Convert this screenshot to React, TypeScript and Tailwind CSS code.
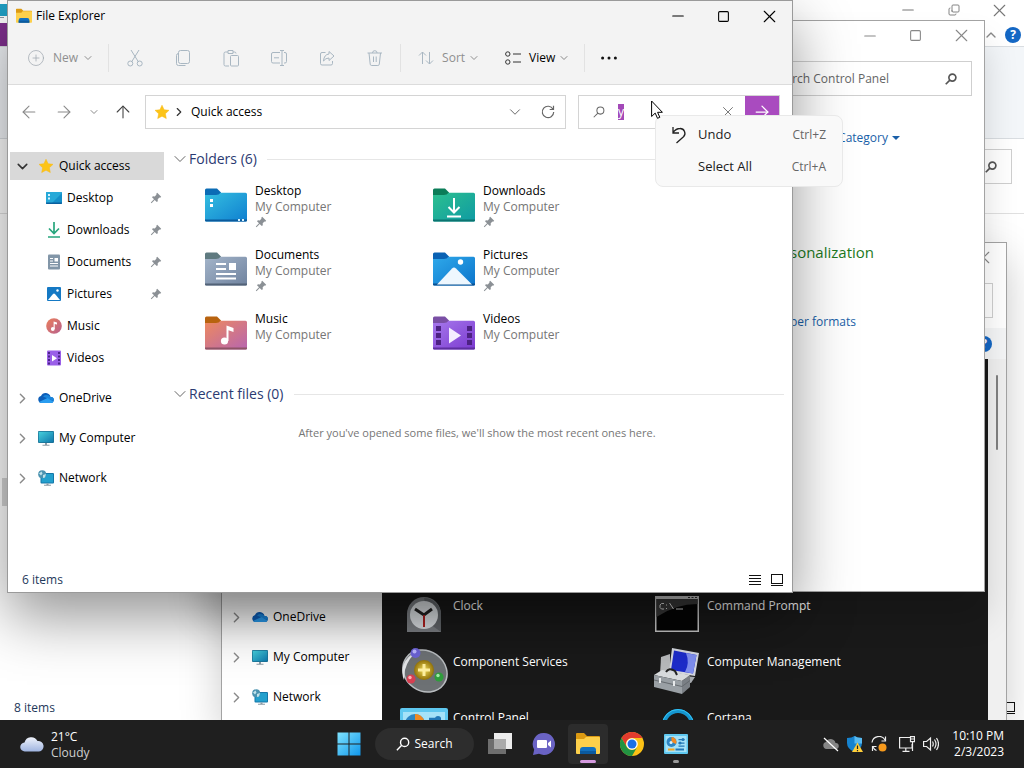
import type { ReactNode } from "react"
import {
	ArrowLeft,
	ArrowRight,
	ArrowUp,
	ChevronDown,
	ChevronRight,
	ChevronUp,
	CirclePlus,
	Copy,
	Minus,
	Square,
	X,
} from "lucide-react"

const places = [
	{ name: "Desktop", icon: <DesktopSmall />, pinned: true },
	{ name: "Downloads", icon: <DownloadsSmall />, pinned: true },
	{ name: "Documents", icon: <DocumentsSmall />, pinned: true },
	{ name: "Pictures", icon: <PicturesSmall />, pinned: true },
	{ name: "Music", icon: <MusicSmall />, pinned: false },
	{ name: "Videos", icon: <VideosSmall />, pinned: false },
]

const drives = [
	{ name: "OneDrive", icon: <OneDriveIcon /> },
	{ name: "My Computer", icon: <ComputerIcon /> },
	{ name: "Network", icon: <NetworkIcon /> },
]

const folders = [
	{
		name: "Desktop",
		pinned: true,
		colors: ["#0b6cb5", "#35bfe0", "#0f7fd0", "#0a5a9c"],
		art: (
			<>
				<path d="M5 11h3v3H5zM5 16h3v3H5z" fill="#fff" />
				<path d="M33 31h2v2h-2zM37 31h2v2h-2z" fill="#d8f3ff" />
			</>
		),
	},
	{
		name: "Downloads",
		pinned: true,
		colors: ["#0b7d58", "#2cc08f", "#0f9aa3", "#0b7470"],
		art: (
			<path
				d="M21 10v14M15.500 19l5.500 5.500 5.500-5.500M14 28.500h14"
				fill="none"
				stroke="#fff"
				strokeWidth="2"
			/>
		),
	},
	{
		name: "Documents",
		pinned: true,
		colors: ["#5f7a80", "#a3b4c9", "#70839f", "#526277"],
		art: (
			<>
				<path
					d="M11 12h10M11 17h10M11 22h20M11 26.500h20"
					stroke="#fff"
					strokeWidth="2"
				/>
				<path d="M24 11h7v7h-7z" fill="#fff" />
			</>
		),
	},
	{
		name: "Pictures",
		pinned: true,
		colors: ["#0a62b4", "#2fa9ea", "#0c74cb", "#0a5192"],
		art: (
			<>
				<path d="M4 32.500 19 16.500q2-2 4 0L39 32.500z" fill="#eef7fe" />
				<circle cx="27.500" cy="10" r="2.700" fill="#fff" />
			</>
		),
	},
	{
		name: "Music",
		pinned: false,
		colors: ["#b8630f", "#ee8a5e", "#b765b0", "#8e5467"],
		art: (
			<>
				<circle cx="19.500" cy="25" r="3.600" fill="#fff" />
				<path d="M21.500 25V9.500l7 2.500v4l-5-1.700V25z" fill="#fff" />
			</>
		),
	},
	{
		name: "Videos",
		pinned: false,
		colors: ["#7a4fa5", "#a678ec", "#7b3ad0", "#5e2fa0"],
		art: (
			<>
				<path d="M16 11.500v16L28 19.500z" fill="#f4ecff" />
				<path
					d="M3 10h5v5H3zM3 17h5v5H3zM3 24h5v5H3zM34 10h5v5h-5zM34 17h5v5h-5zM34 24h5v5h-5z"
					fill="#4d2283"
				/>
			</>
		),
	},
]

const tools = [
	{ name: "Clock", icon: <ClockIcon /> },
	{ name: "Command Prompt", icon: <PromptIcon /> },
	{ name: "Component Services", icon: <ComponentIcon /> },
	{ name: "Computer Management", icon: <ManagementIcon /> },
	{ name: "Control Panel", icon: <ControlPanelIcon className="mt-1.5 h-10 w-12" /> },
	{ name: "Cortana", icon: <CortanaIcon /> },
]

function SearchIcon({ weight, className }: { weight: number; className: string }) {
	return (
		<svg
			viewBox="0 0 13 13"
			className={`shrink-0 ${className}`}
			fill="none"
			stroke="currentColor"
			strokeWidth={weight}
		>
			<circle cx="8" cy="5" r="3.800" />
			<path d="M5.300 7.700.800 12.200" />
		</svg>
	)
}

function Star() {
	return (
		<svg viewBox="0 0 16 16" className="size-4">
			<path
				d="M8 1.200l2.100 4.500 4.900.600-3.600 3.400.900 4.900L8 12.200l-4.300 2.400.900-4.900L1 6.300l4.900-.600z"
				fill="#fcc419"
				stroke="#f9b814"
				strokeWidth=".5"
				strokeLinejoin="round"
			/>
		</svg>
	)
}

function Pin() {
	return (
		<svg viewBox="0 0 12 12" className="size-3">
			<path
				d="M7.200.800 11.200 4.800 10.200 5.700 9.500 5.500 7.700 7.300 7.800 9.200 6.800 10 4.700 8 1.500 11.200.800 10.500 4 7.300 2 5.200 2.900 4.300 4.800 4.400 6.500 2.600 6.300 1.800z"
				fill="#8b9095"
			/>
		</svg>
	)
}

function DesktopSmall() {
	return (
		<svg viewBox="0 0 16 16" className="size-4">
			<rect y="2" width="16" height="12" rx="1" fill="#158fc9" />
			<path d="M0 3a1 1 0 011-1h14a1 1 0 011 1L5 14H1a1 1 0 01-1-1z" fill="#27a9d8" />
			<path d="M2 4h2v2H2zM2 7.500h2v2H2z" fill="#d9f4ff" />
			<path d="M0 12.500h16V13a1 1 0 01-1 1H1a1 1 0 01-1-1z" fill="#0a5f9e" />
		</svg>
	)
}

function DownloadsSmall() {
	return (
		<svg viewBox="0 0 16 16" className="size-4">
			<path
				d="M8 0v11M3 6.500l5 5 5-5M2 15h12"
				fill="none"
				stroke="#27a67d"
				strokeWidth="1.700"
			/>
		</svg>
	)
}

function DocumentsSmall() {
	return (
		<svg viewBox="0 0 16 16" className="size-4">
			<rect x="2" y=".5" width="12" height="15" rx="1" fill="#8296a8" />
			<path d="M4 4.500h3M4 7h3M4 9.500h8M4 12h8" stroke="#fff" />
			<path d="M8.500 4h3.500v3.500H8.500z" fill="#fff" />
		</svg>
	)
}

function PicturesSmall() {
	return (
		<svg viewBox="0 0 16 16" className="size-4">
			<rect x="1" y="1" width="14" height="14" rx="1" fill="#1579c4" />
			<path d="M2 14 7 8q1-1 2 0l5 6z" fill="#fff" />
			<circle cx="11.500" cy="4.500" r="1.200" fill="#fff" />
		</svg>
	)
}

function MusicSmall() {
	return (
		<svg viewBox="0 0 16 16" className="size-4">
			<defs>
				<linearGradient id="music-small" x1="0" y1="0" x2="1" y2="1">
					<stop stopColor="#ea7e5b" />
					<stop offset="1" stopColor="#b8618e" />
				</linearGradient>
			</defs>
			<circle cx="8" cy="8" r="7.800" fill="url(#music-small)" />
			<circle cx="6.800" cy="11" r="1.900" fill="#fff" />
			<path d="M7.600 11V3.500l3.400 1v2L8.700 6v5z" fill="#fff" />
		</svg>
	)
}

function VideosSmall() {
	return (
		<svg viewBox="0 0 16 16" className="size-4">
			<rect x="1" y=".5" width="14" height="15" rx="1" fill="#9a5fe8" />
			<path d="M6 5v6.500l5-3.300z" fill="#fff" />
			<path
				d="M2 2h2v2H2zM2 5.500h2v2H2zM2 9h2v2H2zM2 12.500h2v2H2zM12 2h2v2h-2zM12 5.500h2v2h-2zM12 9h2v2h-2zM12 12.500h2v2h-2z"
				fill="#4c2489"
			/>
		</svg>
	)
}

function OneDriveIcon() {
	return (
		<svg viewBox="0 0 16 16" className="size-4">
			<path d="M3.500 13A3.500 3.500 0 013 6.100 5 5 0 0112.500 7 3 3 0 0113 13z" fill="#0d5eb8" />
			<path d="M5 6.500 15.500 11A2.600 2.600 0 0013 7h-.5A5 5 0 005 6.500z" fill="#1a86dc" />
			<path d="M1 12 9.500 8l6 3.500A2.500 2.500 0 0113 13H3.500A3.500 3.500 0 011 12z" fill="#2a9df0" />
		</svg>
	)
}

function ComputerIcon() {
	return (
		<svg viewBox="0 0 16 16" className="size-4">
			<defs>
				<linearGradient id="screen" x1="0" y1="0" x2="1" y2="1">
					<stop stopColor="#46d0dc" />
					<stop offset="1" stopColor="#0f77ab" />
				</linearGradient>
			</defs>
			<rect y="1" width="16" height="12" rx="1" fill="#1b6f93" />
			<rect x=".7" y="1.700" width="14.600" height="10.600" rx=".5" fill="url(#screen)" />
			<path d="M7 13h2v2H7zM4.500 14.800h7v1h-7z" fill="#8b9aa5" />
		</svg>
	)
}

function NetworkIcon() {
	return (
		<svg viewBox="0 0 16 16" className="size-4">
			<rect x="2.500" y="3" width="13.500" height="10.500" rx="1" fill="#1577a8" />
			<rect x="3.500" y="4" width="11.500" height="8.500" fill="#23a0cd" />
			<path d="M8.500 13.500h2v1.500h-2zM6 14.800h7v1H6z" fill="#8b9aa5" />
			<circle cx="4.200" cy="4.200" r="4" fill="#4c93b0" />
			<path d="M1 3.500l2.500-2 1 2L3 5.500zM5 5l3-1-1 3.500-2 .5z" fill="#c0e2ea" />
		</svg>
	)
}

function ExplorerIcon({ className }: { className: string }) {
	return (
		<svg viewBox="0 0 24 24" className={className}>
			<path d="M0 2a1 1 0 011-1h7l3 3h12a1 1 0 011 1v6H0z" fill="#dc9a12" />
			<path d="M0 7h8l2-2h13a1 1 0 011 1v15a1 1 0 01-1 1H1a1 1 0 01-1-1z" fill="#fdd04b" />
			<path d="M4 22v-4a3 3 0 013-3h10a3 3 0 013 3v4z" fill="#1271c0" />
			<path d="M4 19h16v3H4z" fill="#0b5a9f" />
		</svg>
	)
}

function Folder({ name, colors, art }: { name: string; colors: string[]; art: ReactNode }) {
	return (
		<svg viewBox="0 0 42 34" className="h-[34px] w-[42px] shrink-0">
			<defs>
				<linearGradient id={`folder-${name}`} x1="0" y1="0" x2="1" y2="1">
					<stop stopColor={colors[1]} />
					<stop offset="1" stopColor={colors[2]} />
				</linearGradient>
			</defs>
			<path d="M0 2a1.500 1.500 0 011.500-1.500h10.500l4 4V12H0z" fill={colors[0]} />
			<path
				d="M0 7h11q3 0 4.500-2.200h25A1.500 1.500 0 0142 6.300V32a1.500 1.500 0 01-1.500 1.500h-39A1.500 1.500 0 010 32z"
				fill={`url(#folder-${name})`}
			/>
			<path d="M0 31.500h42a1.500 1.500 0 01-1.500 2h-39a1.500 1.500 0 01-1.500-2z" fill={colors[3]} />
			{art}
		</svg>
	)
}

function ClockIcon() {
	return (
		<svg viewBox="0 0 48 48" className="size-12">
			<path d="M7 42V24a17 17 0 0134 0v18z" fill="#7d8185" />
			<path d="M24 8a17 17 0 0117 17v17L30 34z" fill="#63676b" />
			<circle cx="24" cy="25" r="14" fill="#dfe3e6" />
			<path d="M15 19l9 6 8-6" fill="none" stroke="#222" strokeWidth="3" />
			<path d="M24 25v12" stroke="#b3201f" strokeWidth="2" />
		</svg>
	)
}

function PromptIcon() {
	return (
		<svg viewBox="0 0 48 48" className="size-12">
			<path d="M1 6h44v36H1z" fill="#c9c9c9" />
			<path d="M2.500 9h41v31.500h-41z" fill="#050505" />
			<path d="M2.500 9h41v5Q22 14 2.500 27z" fill="#3a3a3a" />
			<path d="M34 7.500h2M37.500 7.500h2M41 7.500h2" stroke="#333" />
			<path
				d="M10 13.500H7.500L6 15v2.500L7.500 19H10M12.500 14.500v1M12.500 18v1M15.500 13l4 6M22 19h7"
				fill="none"
				stroke="#ddd"
			/>
		</svg>
	)
}

function ComponentIcon() {
	return (
		<svg viewBox="0 0 48 48" className="size-12">
			<defs>
				<radialGradient id="gold">
					<stop stopColor="#f4de5a" />
					<stop offset="1" stopColor="#927209" />
				</radialGradient>
			</defs>
			<ellipse cx="25" cy="25" rx="23" ry="20" transform="rotate(35 25 25)" fill="#6d7174" stroke="#b9bdc0" strokeWidth="1.500" />
			<path d="M4 34a22 22 0 01-1-14Q6 10 18 5 8 12 5 24z" fill="#e4e6e8" />
			<circle cx="24" cy="24" r="10" fill="url(#gold)" />
			<path d="M24 18v12M18 24h12" stroke="#fff0a0" strokeWidth="3" />
			<circle cx="15.500" cy="7" r="5" fill="#6c63d6" />
			<circle cx="14.500" cy="5.500" r="2" fill="#bcb8ff" />
			<circle cx="11" cy="33" r="4.500" fill="#d84052" />
			<circle cx="10" cy="31.500" r="1.700" fill="#ffb3b8" />
			<circle cx="39" cy="31" r="4.500" fill="#2f9e3c" />
			<circle cx="38" cy="29.500" r="1.700" fill="#a4ecaa" />
		</svg>
	)
}

function ManagementIcon() {
	return (
		<svg viewBox="0 0 48 48" className="size-12">
			<path d="M7 11l9-3v18L6 29z" fill="#b8babc" />
			<path d="M18 2l27 5-4 23-26-4z" fill="#d5d8e0" />
			<path d="M20 4.500 42.500 9 39 27.500 17 24z" fill="#1d2ccb" />
			<path d="M32 7l10.500 2L39 27.500 31 26q5-9 1-19z" fill="#7f8ff0" />
			<path d="M31 30l10 1-4 6-5-1z" fill="#a7abb0" />
			<path d="M0 29l8-5 28 5-8 6z" fill="#d9dcde" />
			<path d="M0 29l28 6v13L0 41z" fill="#9aa0a5" />
			<path d="M28 35l8-6v12l-8 7z" fill="#7b8086" />
			<path d="M0 34l28 6.500 8-6" fill="none" stroke="#666b70" />
			<path d="M12 26q3-5 9-1l2 4" fill="none" stroke="#222" strokeWidth="2" />
			<path d="M6 32v5M20 35v5" stroke="#e9ebec" strokeWidth="2" />
		</svg>
	)
}

function ControlPanelIcon({ className }: { className: string }) {
	return (
		<svg viewBox="0 0 48 40" className={className} preserveAspectRatio="none">
			<rect width="48" height="40" rx="2" fill="#5fc8f0" />
			<rect x="3" y="4" width="42" height="32" fill="#a5e2f8" />
			<circle cx="15" cy="16" r="10" fill="#2e86c4" />
			<path d="M15 16V6a10 10 0 019 14z" fill="#f08a24" />
			<circle cx="14" cy="17" r="3" fill="#d6f3ff" />
			<path d="M29 11h12M29 18h12M29 24h12" stroke="#2379b8" strokeWidth="2.500" />
			<circle cx="38" cy="11" r="3" fill="#2379b8" />
			<circle cx="32" cy="18" r="3" fill="#2379b8" />
			<path d="M8 31h13" stroke="#f5a623" strokeWidth="4" />
			<path d="M23 31h17" stroke="#2379b8" strokeWidth="4" />
		</svg>
	)
}

function CortanaIcon() {
	return (
		<svg viewBox="0 0 48 48" className="size-12">
			<circle cx="24" cy="23" r="14" fill="none" stroke="#1596cf" strokeWidth="4" />
			<circle cx="24" cy="23" r="15.500" fill="none" stroke="#35c3f5" />
		</svg>
	)
}

function WindowControls({ color, restore }: { color: string; restore?: boolean }) {
	return (
		<div className={`flex items-center ${color}`}>
			<button aria-label="Minimize" className="flex h-5 w-[46px] items-center justify-center">
				<Minus size={18} strokeWidth={1.500} />
			</button>
			<button aria-label="Maximize" className="flex h-5 w-[45px] items-center justify-center">
				{restore ? (
					<Copy size={12} strokeWidth={1.800} className="-rotate-90" />
				) : (
					<Square size={13} strokeWidth={2} />
				)}
			</button>
			<button aria-label="Close" className="flex h-5 w-[46px] items-center justify-center">
				<X size={21} strokeWidth={1.300} />
			</button>
		</div>
	)
}

function DriveList() {
	return (
		<ul>
			{drives.map((drive) => (
				<li key={drive.name}>
					<button className="flex h-10 w-full items-center pl-[5px] text-black">
						<ChevronRight size={17} className="mr-[7px] text-[#8a8a8a]" />
						{drive.icon}
						<span className="ml-[5px]">{drive.name}</span>
					</button>
				</li>
			))}
		</ul>
	)
}

function ViewToggle() {
	return (
		<div className="flex items-center gap-2.5">
			<button aria-label="Details view">
				<svg viewBox="0 0 12 12" className="size-3" shapeRendering="crispEdges">
					<path d="M0 1.500h12M0 4.500h12M0 7.500h12M0 10.500h12" stroke="#111" />
				</svg>
			</button>
			<button aria-label="Large icons view">
				<svg viewBox="0 0 12 12" className="size-3" shapeRendering="crispEdges">
					<path d="M.5.500h11v9H.500zM0 11.500h12" fill="none" stroke="#111" />
				</svg>
			</button>
		</div>
	)
}

function HelpBadge() {
	return (
		<button
			aria-label="Help"
			className="flex size-4 items-center justify-center rounded-full bg-[#1467c4] text-xs font-bold text-white"
		>
			?
		</button>
	)
}

function RibbonWindow() {
	return (
		<section className="absolute inset-0 flex flex-col bg-white">
			<header className="flex h-[23px] items-start justify-between">
				<svg viewBox="0 0 16 16" className="mt-[3px] -ml-2 size-4">
					<rect y="1" width="16" height="12" rx="1" fill="#1f9fc4" />
					<path d="M4 14.500h8" stroke="#8b9aa5" />
				</svg>
				<WindowControls color="text-[#777] pr-[2px]" restore />
			</header>
			<div className="flex h-[23px] items-center justify-between pr-[3px]">
				<div className="h-full w-12 bg-[#80308f]" />
				<div className="flex items-center gap-1.5">
					<ChevronUp size={16} className="text-[#888]" />
					<HelpBadge />
				</div>
			</div>
			<div className="h-[93px] border-y border-[#d9dde1] bg-[#f3f6f9]" />
			<div className="flex h-[75px] items-start justify-end border-b border-[#e0e0e0] pt-[10px] pr-3">
				<div className="flex h-[35px] w-52 items-center justify-end border border-[#cfcfcf] pr-3.5">
					<SearchIcon weight={1.800} className="size-3 text-[#555]" />
				</div>
			</div>
			<div className="grow pt-[264px]">
				<div className="ml-0.5 h-[28px] w-[156px] bg-[#d4d4d4]" />
			</div>
			<footer className="flex h-6 items-center justify-between pr-[9px] pl-3.5 text-[#1e395b]">
				<span>8 items</span>
				<ViewToggle />
			</footer>
		</section>
	)
}

function ToolsWindow() {
	return (
		<section className="absolute top-[242px] bottom-0 left-[221px] flex w-[786px] flex-col border border-b-0 border-[#a3a3a3] bg-white shadow-[0_16px_40px_rgba(0,0,0,0.2)]">
			<header className="flex h-[29px] shrink-0 items-center justify-end">
				<WindowControls color="text-[#888]" />
			</header>
			<div className="flex h-14 shrink-0 items-center justify-end pr-[13px]">
				<div className="h-[35px] w-52 border border-[#cfcfcf]" />
			</div>
			<div className="flex h-[31px] shrink-0 items-center justify-end bg-[#f5f6f7] pr-[14px]">
				<HelpBadge />
			</div>
			<div className="flex min-h-0 grow overflow-hidden">
				<nav className="w-40 shrink-0 pt-[238px] pl-px">
					<DriveList />
				</nav>
				<ul className="grid grow grid-cols-[254px_254px] content-start bg-[#191919] pt-[231px] pl-[18px] text-white">
					{tools.map((tool) => (
						<li key={tool.name} className="flex h-14 gap-[5px]">
							{tool.icon}
							<span className="pt-2">{tool.name}</span>
						</li>
					))}
				</ul>
				<div className="w-[18px] bg-[#f0f0f0] pt-4 pl-2">
					<div className="h-[75px] w-0.5 rounded bg-[#808080]" />
				</div>
			</div>
		</section>
	)
}

function ControlPanelWindow() {
	return (
		<section className="absolute top-5 left-[199px] h-[572px] w-[786px] border border-[#a3a3a3] bg-white shadow-[0_24px_32px_rgba(0,0,0,0.15)]">
			<header className="flex h-[29px] items-center justify-end">
				<WindowControls color="text-[#888]" />
			</header>
			<div className="flex justify-end pt-[11px] pr-3">
				<label className="flex h-[35px] w-60 items-center gap-14 border border-[#cfcfcf] px-3.5">
					<input
						aria-label="Search Control Panel"
						placeholder="Search Control Panel"
						className="min-w-0 grow text-right outline-none placeholder:text-[#666]"
					/>
					<SearchIcon weight={1.800} className="size-3 text-[#555]" />
				</label>
			</div>
			<div className="flex h-[84px] items-center justify-end gap-1 pr-[84px] text-[#1a5fa8]">
				<button>Category</button>
				<svg viewBox="0 0 8 4" className="h-1 w-2">
					<path d="M0 0h8L4 4z" fill="#1a5fa8" />
				</svg>
			</div>
			<div className="flex flex-col items-end gap-[50px] pt-[62px] pr-[110px]">
				<a href="#appearance" className="text-[15px] leading-5 text-[#1d7a1d]">
					Appearance and Personalization
				</a>
				<a href="#formats" className="mr-[18px] leading-5 text-[#1a5fa8]">
					Change date, time, or number formats
				</a>
			</div>
		</section>
	)
}

function Divider() {
	return <div className="h-7 w-px bg-[#e2e2e2]" />
}

function Toolbar() {
	const icons = [
		{
			label: "Cut",
			art: <path d="M4 0l7.500 12M12 0 4.500 12M5.800 13.500a2.500 2.500 0 11-5 0 2.500 2.500 0 015 0zM15.200 13.500a2.500 2.500 0 11-5 0 2.500 2.500 0 015 0z" />,
		},
		{
			label: "Copy",
			art: <path d="M5.500.500h7a2 2 0 012 2v9a2 2 0 01-2 2h-7a2 2 0 01-2-2v-9a2 2 0 012-2zM3.500 3.500a2 2 0 00-2 2v8a2 2 0 002 2h7" />,
		},
		{
			label: "Paste",
			art: <path d="M5 2H2.500a1.500 1.500 0 00-1.500 1.500v11A1.500 1.500 0 002.500 16H6M5 .500h5v3H5zM10 2h1.500a1.500 1.500 0 011.500 1.500M8.500 5.500h6a1 1 0 011 1v8.500a1 1 0 01-1 1h-6a1 1 0 01-1-1V6.500a1 1 0 011-1z" />,
		},
		{
			label: "Rename",
			art: <path d="M9 2.500H2a1.500 1.500 0 00-1.500 1.500v7.500A1.500 1.500 0 002 13h7M13 2.500h1A1.500 1.500 0 0115.500 4v7.500A1.500 1.500 0 0114 13h-1M11 .500v15M9 .500h4M9 15.500h4M3 7.800h5" />,
		},
		{
			label: "Share",
			art: <path d="M6.500 2.500H3A1.500 1.500 0 001.500 4v9.500A1.500 1.500 0 003 15h9a1.500 1.500 0 001.500-1.500V11M10 1.500 15 6l-5 4.500V8Q6.500 8 4.500 11 5 4.500 10 4z" />,
		},
		{
			label: "Delete",
			art: <path d="M.500 3h14.500M5.500 3a2.300 2.300 0 014.600 0M2 3l1.200 11.200a1.500 1.500 0 001.500 1.300h6.100a1.500 1.500 0 001.500-1.300L13.500 3M6.500 6.500v5.500M9.200 6.500v5.500" />,
		},
	]

	return (
		<div className="flex h-[54px] items-center border-b border-[#dcdcdc] pl-[19px]">
			<button className="flex items-center text-[#8f8f8f]">
				<CirclePlus size={18} strokeWidth={1} className="mr-2 text-[#a0a8b0]" />
				New
				<ChevronDown size={12} className="ml-1" />
			</button>
			<div className="ml-3.5 flex items-center">
				<Divider />
				{icons.map((icon) => (
					<button
						key={icon.label}
						aria-label={icon.label}
						className="flex w-12 items-center justify-center first-of-type:ml-0.5"
					>
						<svg
							viewBox="0 0 16 16"
							className="size-4 overflow-visible"
							fill="none"
							stroke="#a9b7c2"
							strokeWidth="1"
						>
							{icon.art}
						</svg>
					</button>
				))}
				<div className="ml-px">
					<Divider />
				</div>
			</div>
			<button className="ml-[17px] flex items-center text-[#8f8f8f]">
				<svg viewBox="0 0 16 16" className="mr-2 size-4" fill="none" stroke="#a9b7c2">
					<path d="M4.500 14V2M1 5.500 4.500 2 8 5.500M11.500 2v12M8 10.500l3.500 3.500 3.500-3.500" />
				</svg>
				Sort
				<ChevronDown size={12} className="ml-[3px]" />
			</button>
			<button className="ml-[25px] flex items-center text-black">
				<svg viewBox="0 0 16 16" className="mr-2 size-4" fill="none" stroke="#333">
					<circle cx="2.800" cy="4" r="2.200" />
					<circle cx="2.800" cy="12" r="2.200" />
					<path d="M8 4h8M8 12h8" />
				</svg>
				View
				<ChevronDown size={12} className="ml-[3px] text-[#888]" />
			</button>
			<div className="ml-[14px]">
				<Divider />
			</div>
			<button aria-label="See more" className="ml-4">
				<svg viewBox="0 0 16 4" className="h-1 w-4" fill="#111">
					<circle cx="1.600" cy="2" r="1.500" />
					<circle cx="8" cy="2" r="1.500" />
					<circle cx="14.400" cy="2" r="1.500" />
				</svg>
			</button>
		</div>
	)
}

function AddressRow() {
	return (
		<div className="flex h-[54px] items-center pr-3 pl-[11px]">
			<button aria-label="Back" className="text-[#8a8a8a]">
				<ArrowLeft size={20} strokeWidth={1.300} />
			</button>
			<button aria-label="Forward" className="ml-[15px] text-[#8a8a8a]">
				<ArrowRight size={20} strokeWidth={1.300} />
			</button>
			<button aria-label="Recent locations" className="ml-3.5 text-[#8a8a8a]">
				<ChevronDown size={12} />
			</button>
			<button aria-label="Up" className="ml-[13px] text-[#444]">
				<ArrowUp size={20} strokeWidth={1.300} />
			</button>
			<div className="ml-3 flex h-[34px] grow items-center border border-[#d4d4d4] pr-2.5 pl-2">
				<Star />
				<ChevronRight size={14} className="ml-0.5 text-[#333]" />
				<span className="ml-[5px] grow text-black">Quick access</span>
				<button aria-label="Previous locations" className="text-[#666]">
					<ChevronDown size={18} strokeWidth={1.300} />
				</button>
				<button aria-label="Refresh" className="ml-[17px] text-[#666]">
					<svg viewBox="0 0 14 14" className="size-3.5" fill="none" stroke="currentColor" strokeWidth="1.200">
						<path d="M12 4.200A5.700 5.700 0 1012.700 7M12.500.700v3.800H8.700" />
					</svg>
				</button>
			</div>
			<div className="ml-3 flex h-[34px] w-[202px] items-center border border-[#d4d4d4] pl-3.5">
				<SearchIcon weight={1.100} className="size-3 text-[#666]" />
				<label className="flex grow pl-[13px]">
					<input
						aria-label="Search Quick access"
						defaultValue="y"
						className="field-sizing-content h-4 bg-[#a349b8] text-white outline-none"
					/>
				</label>
				<button aria-label="Clear search" className="mr-2 text-[#777]">
					<X size={18} strokeWidth={1.300} />
				</button>
				<button
					aria-label="Search"
					className="flex h-full w-[34px] items-center justify-center bg-[#a94bbf] text-white"
				>
					<ArrowRight size={20} strokeWidth={1.500} />
				</button>
			</div>
		</div>
	)
}

function SectionTitle({ children }: { children: ReactNode }) {
	return (
		<h2 className="flex h-6 items-center text-sm leading-6 text-[#2b3a72]">
			<ChevronDown size={20} strokeWidth={1.200} className="-mr-px text-[#666]" />
			{children}
			<span className="ml-2.5 h-px grow bg-[#e6e6e6]" />
		</h2>
	)
}

function ExplorerWindow() {
	return (
		<section className="absolute top-0 left-[7px] flex h-[593px] w-[786px] flex-col border border-[#9a9a9a] bg-white shadow-[0_24px_56px_rgba(0,0,0,0.42)]">
			<div className="bg-[#f3f3f3]">
				<header className="flex h-[30px] items-center pl-2 text-black">
					<ExplorerIcon className="size-4" />
					<h1 className="ml-1 grow">File Explorer</h1>
					<WindowControls color="text-black" />
				</header>
				<Toolbar />
			</div>
			<AddressRow />
			<div className="flex grow">
				<nav className="w-[156px] shrink-0 pt-[13px] pl-0.5">
					<button className="mb-0.5 flex h-7 w-full items-center bg-[#d9d9d9] pl-1 text-black">
						<ChevronDown size={17} strokeWidth={2.200} className="mr-[7px] text-[#333]" />
						<Star />
						<span className="ml-[5px]">Quick access</span>
					</button>
					<ul className="mb-1">
						{places.map((place) => (
							<li key={place.name}>
								<button className="flex h-8 w-full items-center pr-0.5 pl-9 text-black">
									{place.icon}
									<span className="ml-[5px] grow text-left">{place.name}</span>
									{place.pinned && <Pin />}
								</button>
							</li>
						))}
					</ul>
					<div className="-ml-px">
						<DriveList />
					</div>
				</nav>
				<main className="grow pt-2 pr-2 pl-[6px]">
					<SectionTitle>Folders (6)</SectionTitle>
					<ul className="grid grid-cols-[228px_228px] pt-3 pl-[35px]">
						{folders.map((folder) => (
							<li key={folder.name} className="flex h-16 gap-2 leading-4">
								<div className="pt-[5px]">
									<Folder name={folder.name} colors={folder.colors} art={folder.art} />
								</div>
								<div>
									<p className="text-black">{folder.name}</p>
									<p className="text-[#767676]">My Computer</p>
									{folder.pinned && (
										<div className="pt-px">
											<Pin />
										</div>
									)}
								</div>
							</li>
						))}
					</ul>
					<div className="pt-[7px]">
						<SectionTitle>Recent files (0)</SectionTitle>
					</div>
					<p className="pt-5 text-center text-[11px] text-[#767676]">
						After you've opened some files, we'll show the most recent ones here.
					</p>
				</main>
			</div>
			<footer className="flex h-6 items-center justify-between pr-[9px] pl-3.5 text-[#1e395b]">
				<span>6 items</span>
				<ViewToggle />
			</footer>
		</section>
	)
}

function ContextMenu() {
	return (
		<div
			role="menu"
			className="absolute top-[115px] left-[655px] w-[188px] rounded-lg border border-[#e9e9e9] bg-[#f9f9f9] py-[3px] text-[13px] text-[#1c1c1c]"
		>
			<button role="menuitem" className="flex h-8 w-full items-center pr-4 pl-[15px]">
				<svg viewBox="0 0 16 18" className="h-[18px] w-4" fill="none" stroke="#222" strokeWidth="1.300">
					<path d="M2 1v6h6M2 6.500Q5 2.500 9 2.500a4.800 4.800 0 013.500 8.200L5.500 17" />
				</svg>
				<span className="ml-[11px] grow text-left">Undo</span>
				<span className="text-xs text-[#666]">Ctrl+Z</span>
			</button>
			<button role="menuitem" className="flex h-8 w-full items-center pr-4 pl-[42px]">
				<span className="grow text-left">Select All</span>
				<span className="text-xs text-[#666]">Ctrl+A</span>
			</button>
		</div>
	)
}

function Cursor() {
	return (
		<svg viewBox="0 0 12 19" className="absolute top-[100px] left-[651px] h-[19px] w-3">
			<path
				d="M.600 1v15.500l3.600-3.400L6.500 18.300l2.300-1-2.200-5h4.800z"
				fill="#fff"
				stroke="#000"
				strokeWidth="1"
			/>
		</svg>
	)
}

function TaskButton({ label, children }: { label: string; children: ReactNode }) {
	return (
		<button aria-label={label} className="flex size-10 items-center justify-center">
			{children}
		</button>
	)
}

function Taskbar() {
	return (
		<footer className="grid h-12 shrink-0 grid-cols-[1fr_auto_1fr] items-center bg-[#1f1f1f] text-white">
			<button className="flex items-center gap-[7px] pl-5 text-left leading-4">
				<svg viewBox="0 0 24 16" className="h-4 w-6">
					<defs>
						<linearGradient id="cloud" x1="0" y1="0" x2="0" y2="1">
							<stop stopColor="#eef2fb" />
							<stop offset="1" stopColor="#9fb4e0" />
						</linearGradient>
					</defs>
					<path d="M5 15.500a4.500 4.500 0 01-.5-9A7 7 0 0117.500 5 5.300 5.300 0 0119 15.500z" fill="url(#cloud)" />
				</svg>
				<span className="pt-px">
					<span className="block">21°C</span>
					<span className="block text-[#cfcfcf]">Cloudy</span>
				</span>
			</button>
			<nav className="flex items-center gap-1">
				<TaskButton label="Start">
					<svg viewBox="0 0 24 24" className="size-6">
						<defs>
							<linearGradient id="start" x1="0" y1="0" x2="1" y2="1">
								<stop stopColor="#7fe3ff" />
								<stop offset="1" stopColor="#1096ea" />
							</linearGradient>
						</defs>
						<path d="M.500.500h11v11H.500zM12.500.500h11v11h-11zM.500 12.500h11v11H.500zM12.500 12.500h11v11h-11z" fill="url(#start)" />
					</svg>
				</TaskButton>
				<button className="mx-0.5 flex h-8 w-[99px] items-center justify-center gap-[5px] rounded-full bg-[#2d2d2d]">
					<SearchIcon weight={1.300} className="size-3.5" />
					Search
				</button>
				<TaskButton label="Task view">
					<svg viewBox="0 0 24 24" className="size-6">
						<path d="M6 1h18v16H6z" fill="#ececec" />
						<path d="M0 7h18v15H0z" fill="#777" opacity=".9" />
						<path d="M6 7h12v10H6z" fill="#aaa" />
					</svg>
				</TaskButton>
				<TaskButton label="Chat">
					<svg viewBox="0 0 24 24" className="size-6">
						<path d="M12 1a11 11 0 11-5 20.800L1 23l1.200-5.500A11 11 0 0112 1z" fill="#6a63c4" />
						<path d="M6 8h8a1 1 0 011 1v6a1 1 0 01-1 1H6a1 1 0 01-1-1V9a1 1 0 011-1zM16 11l3-2.500v7L16 13z" fill="#fff" />
					</svg>
				</TaskButton>
				<button
					aria-label="File Explorer"
					className="relative flex size-10 items-center justify-center rounded bg-[#2c2c2c]"
				>
					<ExplorerIcon className="size-6" />
					<span className="absolute bottom-px h-[3px] w-4 rounded bg-[#d59adf]" />
				</button>
				<TaskButton label="Chrome">
					<svg viewBox="0 0 24 24" className="size-6">
						<circle cx="12" cy="12" r="12" fill="#fbc116" />
						<path d="M12 6H22.400A12 12 0 001.600 6l5.200 9A6 6 0 0112 6z" fill="#e33b2e" />
						<path d="M6.800 15 1.600 6A12 12 0 0012 24l5.200-9A6 6 0 016.800 15z" fill="#229342" />
						<circle cx="12" cy="12" r="5.800" fill="#fff" />
						<circle cx="12" cy="12" r="4.500" fill="#1a6fe8" />
					</svg>
				</TaskButton>
				<button aria-label="Control Panel" className="relative flex size-10 items-center justify-center">
					<ControlPanelIcon className="h-5 w-6" />
					<span className="absolute bottom-px h-[3px] w-1.5 rounded bg-[#9a9a9a]" />
				</button>
			</nav>
			<div className="flex items-center justify-end pr-5 leading-4">
				<div className="flex items-center gap-2">
					<svg viewBox="0 0 16 16" className="size-4">
						<path d="M3.500 13A3.500 3.500 0 013 6.100 5 5 0 0112.500 7 3 3 0 0113 13z" fill="#858585" />
						<path d="M1 2l14 13" stroke="#fff" strokeWidth="1.200" />
					</svg>
					<svg viewBox="0 0 16 16" className="size-4">
						<path d="M7.500 0Q10 2 15 2v5q0 6-7.500 9Q0 13 0 7V2q5 0 7.500-2z" fill="#1683cf" />
						<path d="M7.500 0Q10 2 15 2v5.500H7.500z" fill="#58baf0" />
						<path d="M10.500 6.500 16 16H5z" fill="#ffcf3b" />
						<path d="M10.500 9.500v3.500M10.500 14v1.200" stroke="#222" strokeWidth="1.200" />
					</svg>
					<svg viewBox="0 0 16 16" className="size-4">
						<path d="M1 6.500A7 7 0 0114 4M14.500.500V5h-4M1.500 15v-4.500h4M2 11a7 7 0 003.500 3.500" fill="none" stroke="#eee" strokeWidth="1.200" />
						<circle cx="11.500" cy="11.500" r="4" fill="#f79a1c" />
					</svg>
				</div>
				<div className="ml-3 flex items-center gap-2">
					<svg viewBox="0 0 16 16" className="size-4" fill="none" stroke="#eee" strokeWidth="1.200">
						<path d="M11 1.500H.600v10.500h12.500V8M6.800 12v3M3.500 15.300h7M11.500.600h4v5h-4zM13.500 5.500V15M11.500 3h4" />
					</svg>
					<svg viewBox="0 0 16 16" className="size-4" fill="none" stroke="#eee" strokeWidth="1.200">
						<path d="M.600 5.500h3L7.500 2v12L3.600 10.500h-3zM9.500 5.500q1.500 2.500 0 5M11.500 3.500q3 4.500 0 9M13.500 2q4 6 0 12" />
					</svg>
				</div>
				<p className="ml-[13px] text-right">
					<span className="block">10:10 PM</span>
					<span className="block">2/3/2023</span>
				</p>
			</div>
		</footer>
	)
}

export default function App() {
	return (
		<div className="flex h-screen flex-col overflow-hidden font-['Open_Sans','Noto_Sans',sans-serif] text-xs">
			<div className="relative grow overflow-hidden">
				<RibbonWindow />
				<ToolsWindow />
				<ControlPanelWindow />
				<ExplorerWindow />
				<ContextMenu />
				<Cursor />
			</div>
			<Taskbar />
		</div>
	)
}
